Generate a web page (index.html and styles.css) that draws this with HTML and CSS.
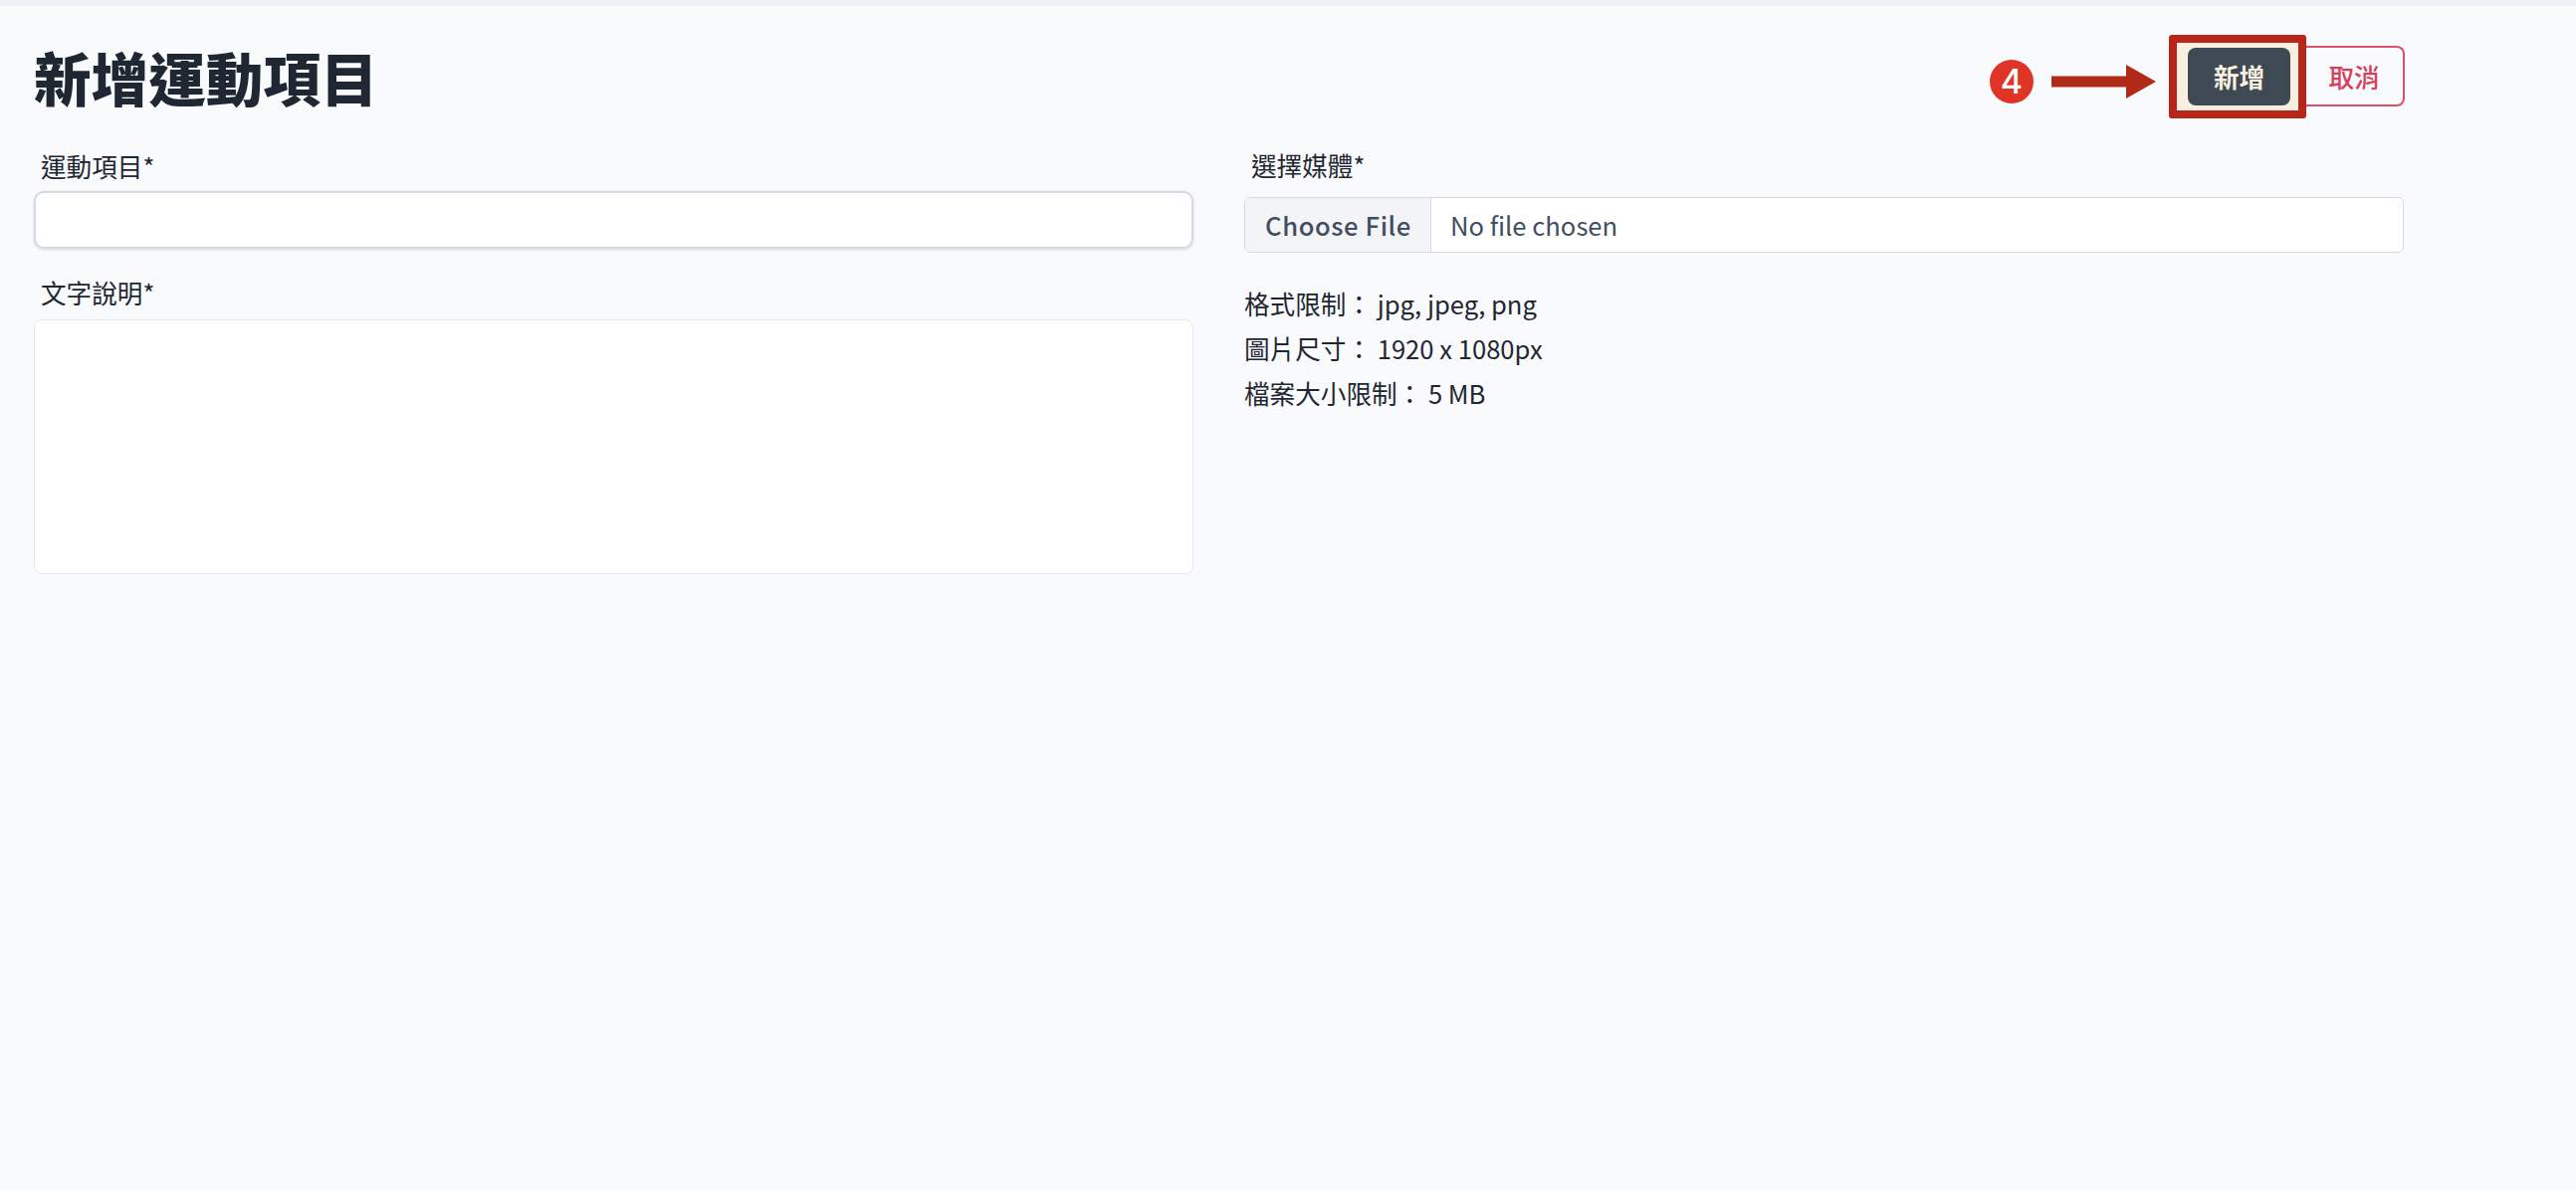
FILE: index.html
```html
<!DOCTYPE html>
<html lang="zh-Hant">
<head>
	<meta charset="utf-8">
	<title>新增運動項目</title>
	<link rel="stylesheet" href="styles.css">
</head>
<body>
	<div class="topLine"></div>
	<div class="page">
		<div class="header">
			<h1 class="title">新增運動項目</h1>
			<div class="actions">
				<button type="button" class="btn btnSave">新增</button>
				<button type="button" class="btn btnCancel">取消</button>

				<!-- step annotation on top of the buttons -->
				<span class="stepBadge">4</span>
				<svg class="stepArrow" width="105" height="34" viewBox="0 0 105 34">
					<path d="M0 11.500H75V0L105 17L75 34V22.500H0Z" fill="#b02a17"/>
				</svg>
				<span class="stepFrame"></span>
			</div>
		</div>

		<div class="formGrid">
			<div class="col">
				<label class="fieldLabel">運動項目*</label>
				<input type="text" class="textInput">
				<label class="fieldLabel labelDesc">文字說明*</label>
				<textarea class="textArea"></textarea>
			</div>
			<div class="col">
				<label class="fieldLabel labelMedia">選擇媒體*</label>
				<div class="fileInput">
					<span class="fileBtn">Choose File</span>
					<span class="fileName">No file chosen</span>
				</div>
				<div class="limits">
					<div>格式限制： jpg, jpeg, png</div>
					<div>圖片尺寸： 1920 x 1080px</div>
					<div>檔案大小限制： 5 MB</div>
				</div>
			</div>
		</div>
	</div>
</body>
</html>
```

FILE: styles.css
```css
* {
	box-sizing: border-box;
}

html, body {
	height: 100%;
}

body {
	margin: 0;
	background-color: #f9fafc;
	color: #1f2733;
	font-family: "Noto Sans CJK TC", "Noto Sans", sans-serif;
	font-size: 25.6px;
	overflow: hidden;
}

.topLine {
	height: 6px;
	background-color: #eef1f5;
}

.page {
	padding: 0 173px 0 34px;
}

.header {
	display: flex;
	justify-content: space-between;
	align-items: flex-start;
	height: 135px;
}

.title {
	margin: 31px 0 0;
	font-size: 57.6px;
	line-height: 80px;
	font-weight: 900;
	color: #1f2733;
}

.actions {
	position: relative;
	display: flex;
	margin: 40px -1px 0 0;
}

.btn {
	font-family: inherit;
	font-size: 25.6px;
	line-height: 36px;
	height: 61px;
	padding: 0;
	border-radius: 8px;
}

.btnSave {
	position: relative;
	z-index: 2;
	width: 103px;
	height: 58px;
	margin: 2px 15px 0 0;
	background-color: #3f4953;
	border: none;
	color: #f8f1e2;
	font-weight: 700;
}

.btnCancel {
	width: 100px;
	border: 2px solid #dc4f68;
	border-left: none;
	border-radius: 0 8px 8px 0;
	background-color: transparent;
	color: #d6405e;
	font-weight: 500;
}

.stepFrame {
	position: absolute;
	z-index: 1;
	left: -19px;
	top: -11px;
	width: 138px;
	height: 84px;
	background-color: #f6efe2;
	border: 8px solid #b8261a;
	border-radius: 3px;
}

.stepBadge {
	position: absolute;
	left: -199px;
	top: 14px;
	width: 44px;
	height: 44px;
	border-radius: 50%;
	background-color: #e03426;
	color: #fff;
	font-family: "Inter", sans-serif;
	font-size: 34px;
	font-weight: 500;
	line-height: 44px;
	text-align: center;
}

.stepArrow {
	position: absolute;
	left: -137px;
	top: 19px;
}

.formGrid {
	display: grid;
	grid-template-columns: 1fr 1fr;
	column-gap: 51px;
}

.col {
	display: flex;
	flex-direction: column;
	min-width: 0;
}

.fieldLabel {
	padding: 8px 0 0 7px;
	height: 51px;
	line-height: 36px;
	color: #1f2733;
}

.labelDesc {
	margin-top: 20px;
	padding-top: 6px;
}

.labelMedia {
	height: 57px;
	padding-top: 7px;
}

.textInput {
	height: 58px;
	background-color: #fff;
	border: 2px solid #d5d9e2;
	border-radius: 10px;
	box-shadow: 0 1px 3px rgba(60, 70, 90, 0.18);
	outline: none;
}

.textArea {
	height: 256px;
	background-color: #fff;
	border: 1px solid #e6e8ee;
	border-radius: 8px;
	resize: none;
	outline: none;
}

.fileInput {
	display: flex;
	height: 56px;
	background-color: #fff;
	border: 1px solid #d5d9e2;
	border-radius: 6px;
	color: #414e62;
	line-height: 54px;
	overflow: hidden;
}

.fileBtn {
	width: 187px;
	padding-left: 20px;
	background-color: #f3f4f6;
	border-right: 1px solid #d5d9e2;
	font-weight: 500;
	letter-spacing: 0.6px;
}

.fileName {
	padding-left: 19px;
}

.limits {
	margin-top: 28px;
	line-height: 45px;
	color: #1f2733;
}
```
